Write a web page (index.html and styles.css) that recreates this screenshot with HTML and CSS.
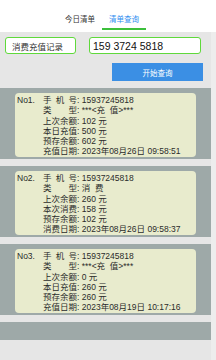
FILE: index.html
```html
<!DOCTYPE html>
<html lang="zh">
<head>
<meta charset="utf-8">
<title>清单查询</title>
<link rel="stylesheet" href="styles.css">
</head>
<body>
<div class="app">
  <header class="tabs">
    <div class="tab">今日清单</div>
    <div class="tab active">清单查询</div>
  </header>
  <main class="main">
    <section class="form">
      <div class="fields">
        <div class="field type">消费充值记录</div>
        <div class="field phone">159 3724 5818</div>
      </div>
      <div class="actions"><button class="btn">开始查询</button></div>
    </section>
    <section class="list">
      <div class="band">
        <div class="card">
          <div class="no">No1.</div>
          <div class="rows">
            <div class="row"><span class="lbl">手机号</span><span class="val">: 15937245818</span></div>
            <div class="row"><span class="lbl">类型</span><span class="val">: ***&lt;充&nbsp;&nbsp;值&gt;***</span></div>
            <div class="row"><span class="lbl">上次余额</span><span class="val">: 102 元</span></div>
            <div class="row"><span class="lbl">本日充值</span><span class="val">: 500 元</span></div>
            <div class="row"><span class="lbl">预存余额</span><span class="val">: 602 元</span></div>
            <div class="row"><span class="lbl">充值日期</span><span class="val">: 2023年08月26日 09:58:51</span></div>
          </div>
        </div>
      </div>
      <div class="band">
        <div class="card">
          <div class="no">No2.</div>
          <div class="rows">
            <div class="row"><span class="lbl">手机号</span><span class="val">: 15937245818</span></div>
            <div class="row"><span class="lbl">类型</span><span class="val">: 消&nbsp;&nbsp;费</span></div>
            <div class="row"><span class="lbl">上次余额</span><span class="val">: 260 元</span></div>
            <div class="row"><span class="lbl">本次消费</span><span class="val">: 158 元</span></div>
            <div class="row"><span class="lbl">预存余额</span><span class="val">: 102 元</span></div>
            <div class="row"><span class="lbl">消费日期</span><span class="val">: 2023年08月26日 09:58:37</span></div>
          </div>
        </div>
      </div>
      <div class="band">
        <div class="card">
          <div class="no">No3.</div>
          <div class="rows">
            <div class="row"><span class="lbl">手机号</span><span class="val">: 15937245818</span></div>
            <div class="row"><span class="lbl">类型</span><span class="val">: ***&lt;充&nbsp;&nbsp;值&gt;***</span></div>
            <div class="row"><span class="lbl">上次余额</span><span class="val">: 0 元</span></div>
            <div class="row"><span class="lbl">本日充值</span><span class="val">: 260 元</span></div>
            <div class="row"><span class="lbl">预存余额</span><span class="val">: 260 元</span></div>
            <div class="row"><span class="lbl">充值日期</span><span class="val">: 2023年08月19日 10:17:16</span></div>
          </div>
        </div>
      </div>
      <div class="band empty"></div>
    </section>
  </main>
</div>
</body>
</html>
```

FILE: styles.css
```css
* { box-sizing: border-box; }
html, body { margin: 0; padding: 0; }
body {
  width: 216px;
  height: 360px;
  overflow: hidden;
  background: #ededed;
  font-family: "Liberation Sans", "Noto Sans CJK SC", sans-serif;
  color: #2b2b2b;
}
.app { display: flex; flex-direction: column; min-height: 360px; }

.tabs {
  height: 32px;
  background: #ffffff;
  display: flex;
  padding: 14px 0 0 58px;
  font-size: 7.5px;
}
.tab {
  height: 16px;
  line-height: 12px;
  padding: 0 7px 2px;
  border-bottom: 2px solid transparent;
  color: #333333;
}
.tab.active {
  color: #2f8ef0;
  border-bottom-color: #3cbf3c;
}

.main {
  width: 211px;
  flex: 1;
  background: #e6e6e6;
}

.form { padding: 5px 8px 7px 5px; }
.fields { display: flex; gap: 13px; }
.field {
  height: 17px;
  border: 1.5px solid #5fd93b;
  border-radius: 3px;
  background: #ffffff;
  display: flex;
  align-items: center;
}
.field.type {
  width: 71px;
  padding-left: 6px;
  font-size: 8.5px;
  color: #333333;
}
.field.phone {
  width: 112px;
  padding-left: 3px;
  font-size: 10.5px;
  color: #111111;
}
.actions { display: flex; justify-content: flex-end; margin-top: 9px; }
.btn {
  width: 91px;
  height: 18px;
  border: 0;
  border-radius: 0;
  background: #3b8fe4;
  color: #ffffff;
  font-family: inherit;
  font-size: 7.5px;
  padding: 0;
}

.band {
  background: #9ea9a8;
  padding: 5px 15px 2px;
  margin-bottom: 7px;
}
.band.empty { height: 18px; padding: 0; }
.card {
  height: 64px;
  background: #e8ebcd;
  border-radius: 4px;
  padding: 2px 0 0 2px;
  display: flex;
  font-size: 8.5px;
  line-height: 10.3px;
}
.no { width: 26px; }
.rows { display: flex; flex-direction: column; }
.row { white-space: nowrap; }
.lbl {
  display: inline-block;
  width: 34px;
  text-align: justify;
  text-align-last: justify;
}
```
